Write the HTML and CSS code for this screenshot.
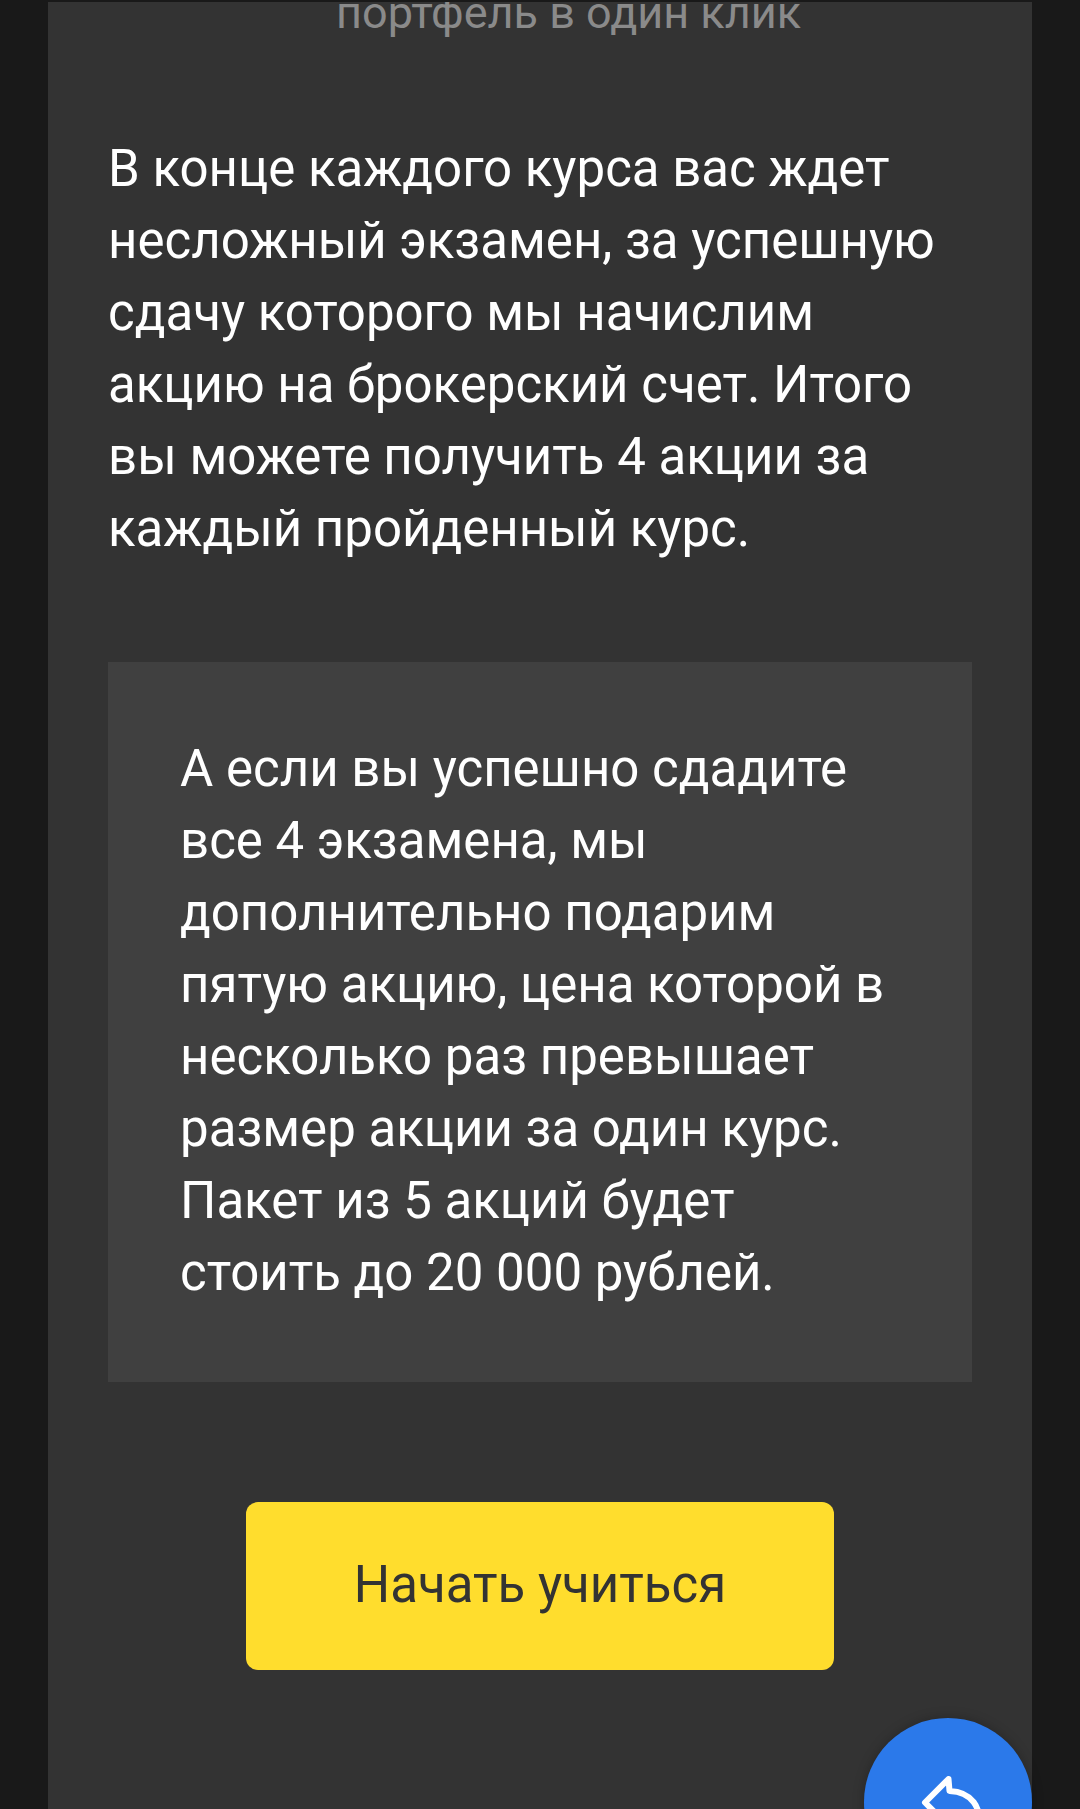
FILE: index.html
```html
<!DOCTYPE html>
<html lang="ru">
<head>
<meta charset="utf-8">
<title>Курс</title>
<link rel="stylesheet" href="styles.css">
</head>
<body>
<main class="card">
  <p class="caption">портфель в один клик</p>
  <p class="lead">В конце каждого курса вас ждет несложный экзамен, за успешную сдачу которого мы начислим акцию на брокерский счет. Итого вы можете получить 4 акции за каждый пройденный курс.</p>
  <section class="note">
    <p>А если вы успешно сдадите все 4 экзамена, мы дополнительно подарим пятую акцию, цена которой в несколько раз превышает размер акции за один курс. Пакет из 5 акций будет стоить до 20 000 рублей.</p>
  </section>
  <div class="actions"><a class="cta">Начать учиться</a></div>
</main>
<button class="fab" aria-label="Назад">
  <svg class="fab-icon" viewBox="0 0 168 168" width="168" height="168" fill="none" stroke="#fff" stroke-width="6" stroke-linejoin="round" stroke-linecap="round">
    <path d="M84.500 61 L61 84.500 L84.500 108 V96 H98 C106 96 112 101 114 108 C118 90 108 74 85.500 73 Z"/>
  </svg>
</button>
</body>
</html>
```
FILE: styles.css
```css
html, body {
  margin: 0;
  height: 1809px;
  overflow: hidden;
  background: #191919;
}
body {
  position: relative;
  display: flex;
  flex-direction: column;
  align-items: center;
  padding-top: 2px;
  box-sizing: border-box;
  font-family: Roboto, "Noto Sans", sans-serif;
}
.card {
  width: 984px;
  height: 1807px;
  background: #333333;
  box-sizing: border-box;
  padding: 0 60px;
  overflow: hidden;
}
.caption {
  margin: -19px 0 0;
  padding-left: 228px;
  font-size: 45px;
  line-height: 60px;
  color: #8a8a8a;
  white-space: nowrap;
}
.lead {
  margin: 90px 0 0;
  font-size: 51px;
  line-height: 72px;
  color: #fff;
}
.note {
  margin-top: 97px;
  padding: 71px 72px 73px;
  background: #404040;
}
.note p {
  margin: 0;
  font-size: 51px;
  line-height: 72px;
  color: #fff;
}
.actions {
  display: flex;
  justify-content: center;
  margin-top: 120px;
}
.cta {
  width: 588px;
  height: 168px;
  box-sizing: border-box;
  padding-bottom: 4px;
  display: flex;
  align-items: center;
  justify-content: center;
  border-radius: 12px;
  background: #ffdd2d;
  color: #333333;
  font-size: 51px;
}
.fab {
  position: absolute;
  left: 864px;
  top: 1718px;
  width: 168px;
  height: 168px;
  padding: 0;
  border: 0;
  border-radius: 50%;
  background: #2b79ea;
  box-shadow: 0 0 12px rgba(0, 0, 0, 0.25);
}
.fab-icon {
  display: block;
}
```
